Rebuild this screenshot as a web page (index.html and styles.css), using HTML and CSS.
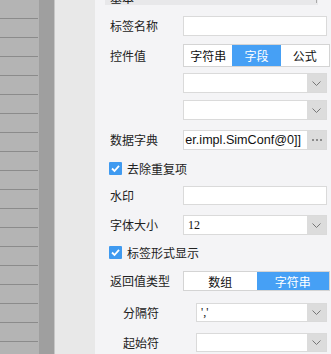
FILE: index.html
```html
<!DOCTYPE html>
<html>
<head>
<meta charset="utf-8">
<link rel="stylesheet" href="styles.css">
</head>
<body>
<div class="app">
  <div class="rail"></div>
  <div class="strip"></div>
  <div class="gutter"></div>
  <div class="panel">
    <div class="section-head"><span class="section-title">基本</span><span class="section-caret"></span></div>
    <div class="form">
      <div class="row"><span class="label">标签名称</span><div class="input"></div></div>
      <div class="row row-seg mt2"><span class="label">控件值</span>
        <div class="seg"><span class="seg-item">字符串</span><span class="seg-item active">字段</span><span class="seg-item">公式</span></div>
      </div>
      <div class="row"><span class="label"></span>
        <div class="select"><span class="select-value"></span><span class="select-btn"><svg width="9" height="5" viewBox="0 0 9 5"><polyline points="0.5,0.5 4.5,4.5 8.5,0.5" fill="none" stroke="#777" stroke-width="1"/></svg></span></div>
      </div>
      <div class="row mt1"><span class="label"></span>
        <div class="select"><span class="select-value"></span><span class="select-btn"><svg width="9" height="5" viewBox="0 0 9 5"><polyline points="0.5,0.5 4.5,4.5 8.5,0.5" fill="none" stroke="#777" stroke-width="1"/></svg></span></div>
      </div>
      <div class="row mt4"><span class="label">数据字典</span>
        <div class="select"><span class="select-value dict-value"><span>er.impl.SimConf@0]]</span></span><span class="select-btn dots"><i></i><i></i><i></i></span></div>
      </div>
      <div class="row mt2"><label class="check"><svg width="13" height="13" viewBox="0 0 13 13"><rect width="13" height="13" rx="1" fill="#3f9af0"/><polyline points="3,6.5 5.5,9 10,3.8" fill="none" stroke="#fff" stroke-width="1.8"/></svg><span>去除重复项</span></label></div>
      <div class="row row-19 mt2"><span class="label">水印</span><div class="input"></div></div>
      <div class="row mt4"><span class="label">字体大小</span>
        <div class="select"><span class="select-value serif">12</span><span class="select-btn"><svg width="9" height="5" viewBox="0 0 9 5"><polyline points="0.5,0.5 4.5,4.5 8.5,0.5" fill="none" stroke="#777" stroke-width="1"/></svg></span></div>
      </div>
      <div class="row mt1"><label class="check"><svg width="13" height="13" viewBox="0 0 13 13"><rect width="13" height="13" rx="1" fill="#3f9af0"/><polyline points="3,6.5 5.5,9 10,3.8" fill="none" stroke="#fff" stroke-width="1.8"/></svg><span>标签形式显示</span></label></div>
      <div class="row mt3"><span class="label">返回值类型</span>
        <div class="seg"><span class="seg-item">数组</span><span class="seg-item active">字符串</span></div>
      </div>
      <div class="row row-19 sub mt6"><span class="label">分隔符</span>
        <div class="select"><span class="select-value serif">','</span><span class="select-btn"><svg width="9" height="5" viewBox="0 0 9 5"><polyline points="0.5,0.5 4.5,4.5 8.5,0.5" fill="none" stroke="#777" stroke-width="1"/></svg></span></div>
      </div>
      <div class="row row-19 sub mt5"><span class="label">起始符</span>
        <div class="select"><span class="select-value"></span><span class="select-btn"><svg width="9" height="5" viewBox="0 0 9 5"><polyline points="0.5,0.5 4.5,4.5 8.5,0.5" fill="none" stroke="#777" stroke-width="1"/></svg></span></div>
      </div>
    </div>
  </div>
</div>
</body>
</html>
```
FILE: styles.css
```css
html, body {
  margin: 0;
  padding: 0;
}
body {
  width: 331px;
  height: 354px;
  overflow: hidden;
  font-family: "Noto Sans CJK SC", "Liberation Sans", sans-serif;
  font-size: 12px;
  color: #222;
}
.app {
  display: flex;
  height: 354px;
}
.rail {
  width: 39px;
  flex: none;
  background-color: #b4b4b4;
  background-image: repeating-linear-gradient(to bottom, #b4b4b4 0, #b4b4b4 18px, #8b8b8b 18px, #8b8b8b 19px);
  background-size: 38px 100%;
  background-repeat: no-repeat;
}
.strip {
  width: 15px;
  flex: none;
  background: #9f9f9f;
  border-right: 1px solid #c6c6c6;
}
.gutter {
  width: 40px;
  flex: none;
  background: #e8e8e8;
}
.panel {
  flex: 1;
  background: #f4f4f6;
  min-width: 0;
}
.section-head {
  position: relative;
  height: 5px;
  margin: 0 13px 0 10px;
  background: #e8e8ea;
  overflow: hidden;
}
.section-title {
  display: block;
  padding-left: 5px;
  line-height: 12px;
  margin-top: -8px;
}
.section-caret {
  position: absolute;
  right: 1px;
  top: 0;
  width: 1px;
  height: 3px;
  background: #aaa;
}
.form {
  display: flex;
  flex-direction: column;
  gap: 6px;
  padding: 11px 4px 0 15px;
}
.row {
  display: flex;
  align-items: center;
  height: 20px;
}
.row-seg {
  height: 23px;
}
.row-19 {
  height: 19px;
}
.sub {
  padding-left: 13px;
}
.mt1 { margin-top: 1px; }
.mt2 { margin-top: 2px; }
.mt3 { margin-top: 3px; }
.mt4 { margin-top: 4px; }
.mt5 { margin-top: 5px; }
.mt6 { margin-top: 6px; }
.label {
  width: 73px;
  flex: none;
  line-height: 20px;
}
.input {
  flex: 1;
  height: 100%;
  box-sizing: border-box;
  background: #fff;
  border: 1px solid #dadada;
}
.select {
  flex: 1;
  height: 100%;
  box-sizing: border-box;
  display: flex;
  background: #fff;
  border: 1px solid #dadada;
  min-width: 0;
}
.select-value {
  flex: 1;
  min-width: 0;
  display: flex;
  align-items: center;
  padding-left: 4px;
  overflow: hidden;
  white-space: nowrap;
}
.serif {
  font-family: "Liberation Serif", "DejaVu Serif", serif;
  font-size: 12px;
  color: #111;
}
.dict-value {
  justify-content: flex-end;
  padding-left: 0;
  padding-right: 6px;
  font-family: "Liberation Sans", Arial, sans-serif;
  font-size: 12.6px;
  color: #111;
}
.select-btn {
  width: 19px;
  flex: none;
  display: flex;
  align-items: center;
  justify-content: center;
  background: #dcdcdc;
}
.dots {
  gap: 2px;
}
.dots i {
  display: block;
  width: 2px;
  height: 2px;
  background: #8c8c8c;
}
.check {
  display: flex;
  align-items: center;
  gap: 5px;
  margin-left: -1px;
}
.check svg {
  flex: none;
}
.seg {
  display: flex;
  width: 147px;
  height: 100%;
  box-sizing: border-box;
  border: 1px solid #d4d4d4;
  background: #fff;
  margin-right: -3px;
}
.seg-item {
  flex: 1;
  display: flex;
  align-items: center;
  justify-content: center;
  color: #111;
}
.seg-item.active {
  background: #46a0f5;
  color: #fff;
}
```
